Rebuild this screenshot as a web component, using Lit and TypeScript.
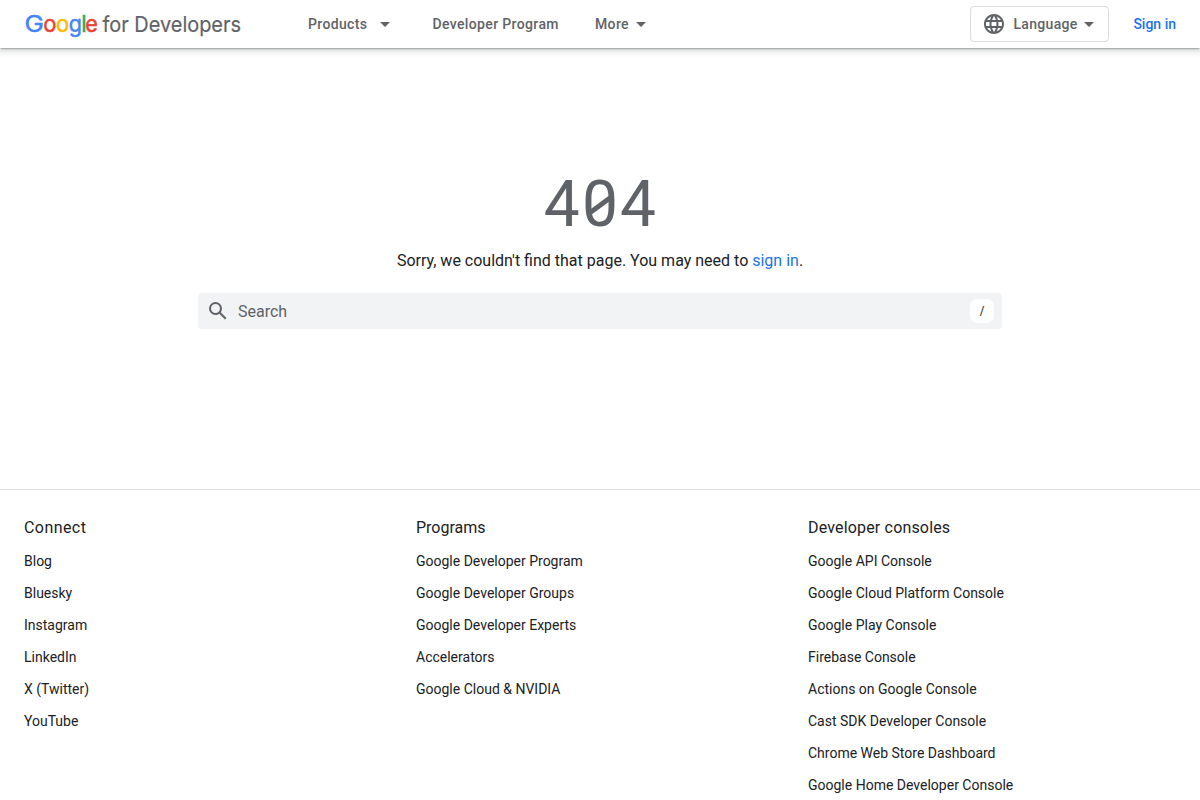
import { LitElement, html, svg, css } from "lit";
import { customElement } from "lit/decorators.js";

const columns = [
  {
    title: "Connect",
    cls: "t-connect",
    links: ["Blog", "Bluesky", "Instagram", "LinkedIn", "X (Twitter)", "YouTube"],
  },
  {
    title: "Programs",
    cls: "t-programs",
    links: [
      "Google Developer Program",
      "Google Developer Groups",
      "Google Developer Experts",
      "Accelerators",
      "Google Cloud & NVIDIA",
    ],
  },
  {
    title: "Developer consoles",
    cls: "t-consoles",
    links: [
      "Google API Console",
      "Google Cloud Platform Console",
      "Google Play Console",
      "Firebase Console",
      "Actions on Google Console",
      "Cast SDK Developer Console",
      "Chrome Web Store Dashboard",
      "Google Home Developer Console",
    ],
  },
];

const logoLetters: [string, string, number, number][] = [
  ["G", "#4285f4", 24.6, 19.4],
  ["o", "#ea4335", 43.3, 13.2],
  ["o", "#fbbc04", 56.1, 13.2],
  ["g", "#4285f4", 68.7, 13.2],
  ["l", "#34a853", 81.3, 5.4],
  ["e", "#ea4335", 85.3, 12.6],
];

const caret = html`<svg class="caret" width="10" height="5" viewBox="0 0 10 5"><path d="M0 0l5 5 5-5z" /></svg>`;

@customElement("app-root")
export class AppRoot extends LitElement {
  static styles = css`
    :host {
      display: block;
      height: 800px;
      overflow: hidden;
      background: #fff;
      color: #202124;
      font-family: Roboto, sans-serif;
      font-size: 14px;
      line-height: 20px;
    }
    svg { display: block; flex: none; }
    a { color: inherit; text-decoration: none; }
    header {
      position: relative;
      box-sizing: border-box;
      display: flex;
      align-items: center;
      height: 48px;
      padding-right: 24px;
      color: #5f6368;
      font-weight: 500;
      box-shadow: 0 2px 1px -1px rgba(60, 64, 67, 0.2), 0 1px 2px 0 rgba(60, 64, 67, 0.2), 0 2px 6px 2px rgba(60, 64, 67, 0.17);
    }
    .logo-text { font-family: Inter, sans-serif; font-size: 22px; font-weight: 400; }
    .logo-g { font-size: 23.5px; }
    .logo-rest { fill: #5f6368; stroke: #5f6368; stroke-width: 0.2px; }
    nav { display: flex; align-items: center; margin-left: 48px; }
    .caret { fill: #5f6368; }
    .item { display: flex; align-items: center; letter-spacing: 0.36px; }
    .products { width: 124.5px; gap: 12.6px; }
    .program { width: 162.5px; }
    .more { gap: 7px; }
    .spacer { flex: 1; }
    .language {
      box-sizing: border-box;
      display: flex;
      align-items: center;
      width: 139px;
      height: 36px;
      padding-left: 11px;
      border: 1px solid #dadce0;
      border-radius: 4px;
      letter-spacing: 0.34px;
    }
    .globe { fill: #5f6368; margin-right: 7px; }
    .language .caret { margin-left: 6px; }
    .signin { margin-left: 24px; color: #1a73e8; }
    main {
      box-sizing: border-box;
      display: flex;
      flex-direction: column;
      align-items: center;
      height: 441px;
      padding-top: 125px;
    }
    .code { position: relative; }
    h1 {
      margin: 0;
      font-size: 64px;
      font-weight: 400;
      line-height: 64px;
      letter-spacing: 2.2px;
      padding-left: 2px;
      color: #5f6368;
    }
    .slash { position: absolute; left: 0; top: 0; width: 100%; height: 100%; }
    .message { margin: 12px 0 0; font-size: 16px; line-height: 24px; }
    .message a { color: #1a73e8; }
    .search {
      box-sizing: border-box;
      display: flex;
      align-items: center;
      width: 804px;
      height: 36px;
      margin-top: 20px;
      padding: 0 8px;
      border-radius: 4px;
      background: #f1f3f4;
      color: #5f6368;
      font-size: 16px;
    }
    .search svg { fill: #5f6368; margin-right: 8px; }
    .search span { padding-top: 2px; }
    .key {
      display: grid;
      place-items: center;
      width: 24px;
      height: 24px;
      border-radius: 7px;
      background: #fff;
      color: #3c4043;
      font-size: 12px;
      font-weight: 500;
    }
    footer {
      display: grid;
      grid-template-columns: 392px 392px 1fr;
      padding: 26px 0 0 24px;
      border-top: 1px solid #dadce0;
    }
    h3 { margin: 0 0 11px; font-size: 16px; line-height: 24px; font-weight: 400; }
    .t-connect { letter-spacing: 0.43px; }
    .t-consoles { letter-spacing: 0.17px; }
    ul { margin: 0; padding: 0; list-style: none; display: grid; gap: 12px; }
  `;

  render() {
    return html`
      <header>
        <svg width="260" height="48" viewBox="0 0 260 48" class="logo-text">
          ${logoLetters.map(
            ([ch, color, x, w]) =>
              svg`<text class="logo-g" x=${x} y="32" fill=${color} stroke=${color} stroke-width="0.5" textLength=${w} lengthAdjust="spacingAndGlyphs">${ch}</text>`
          )}
          <text class="logo-rest" x="102.5" y="32" textLength="138.5" lengthAdjust="spacingAndGlyphs">for Developers</text>
        </svg>
        <nav>
          <a class="item products">Products ${caret}</a>
          <a class="item program">Developer Program</a>
          <a class="item more">More ${caret}</a>
        </nav>
        <div class="spacer"></div>
        <div class="language">
          <svg class="globe" width="24" height="24" viewBox="0 0 24 24">
            <path d="M11.99 2C6.47 2 2 6.48 2 12s4.47 10 9.99 10C17.52 22 22 17.52 22 12S17.52 2 11.99 2zm6.93 6h-2.95a15.65 15.65 0 0 0-1.38-3.56A8.03 8.03 0 0 1 18.92 8zM12 4.04c.83 1.2 1.48 2.53 1.91 3.96h-3.82c.43-1.43 1.08-2.76 1.91-3.96zM4.26 14C4.1 13.36 4 12.69 4 12s.1-1.36.26-2h3.38c-.08.66-.14 1.32-.14 2s.06 1.34.14 2H4.26zm.82 2h2.95c.32 1.25.78 2.45 1.38 3.56A7.99 7.99 0 0 1 5.08 16zm2.95-8H5.08a7.99 7.99 0 0 1 4.33-3.56A15.65 15.65 0 0 0 8.03 8zM12 19.96c-.83-1.2-1.48-2.53-1.91-3.96h3.82c-.43 1.43-1.08 2.76-1.91 3.96zM14.34 14H9.66c-.09-.66-.16-1.32-.16-2s.07-1.35.16-2h4.68c.09.65.16 1.32.16 2s-.07 1.34-.16 2zm.25 5.56c.6-1.11 1.06-2.31 1.38-3.56h2.95a8.03 8.03 0 0 1-4.33 3.56zM16.36 14c.08-.66.14-1.32.14-2s-.06-1.34-.14-2h3.38c.16.64.26 1.31.26 2s-.1 1.36-.26 2h-3.38z" />
          </svg>
          <span>Language</span>${caret}
        </div>
        <a class="signin">Sign in</a>
      </header>
      <main>
        <div class="code">
          <h1>404</h1>
          <svg class="slash" viewBox="0 0 116 64" preserveAspectRatio="xMidYMid meet">
            <path d="M48 39.5L69 24" fill="none" stroke="#5f6368" stroke-width="5" />
          </svg>
        </div>
        <p class="message">Sorry, we couldn't find that page. You may need to <a>sign in</a>.</p>
        <div class="search">
          <svg width="24" height="24" viewBox="0 0 24 24">
            <path d="M20.49 19l-5.73-5.73C15.53 12.2 16 10.91 16 9.5A6.5 6.5 0 1 0 9.5 16c1.41 0 2.7-.47 3.77-1.24L19 20.49 20.49 19zM5 9.5C5 7.01 7.01 5 9.5 5S14 7.01 14 9.5 11.99 14 9.5 14 5 11.99 5 9.5z" />
          </svg>
          <span>Search</span>
          <div class="spacer"></div>
          <div class="key">/</div>
        </div>
      </main>
      <footer>
        ${columns.map(
          (c) => html`<section>
            <h3 class=${c.cls}>${c.title}</h3>
            <ul>
              ${c.links.map((l) => html`<li><a>${l}</a></li>`)}
            </ul>
          </section>`
        )}
      </footer>
    `;
  }
}
